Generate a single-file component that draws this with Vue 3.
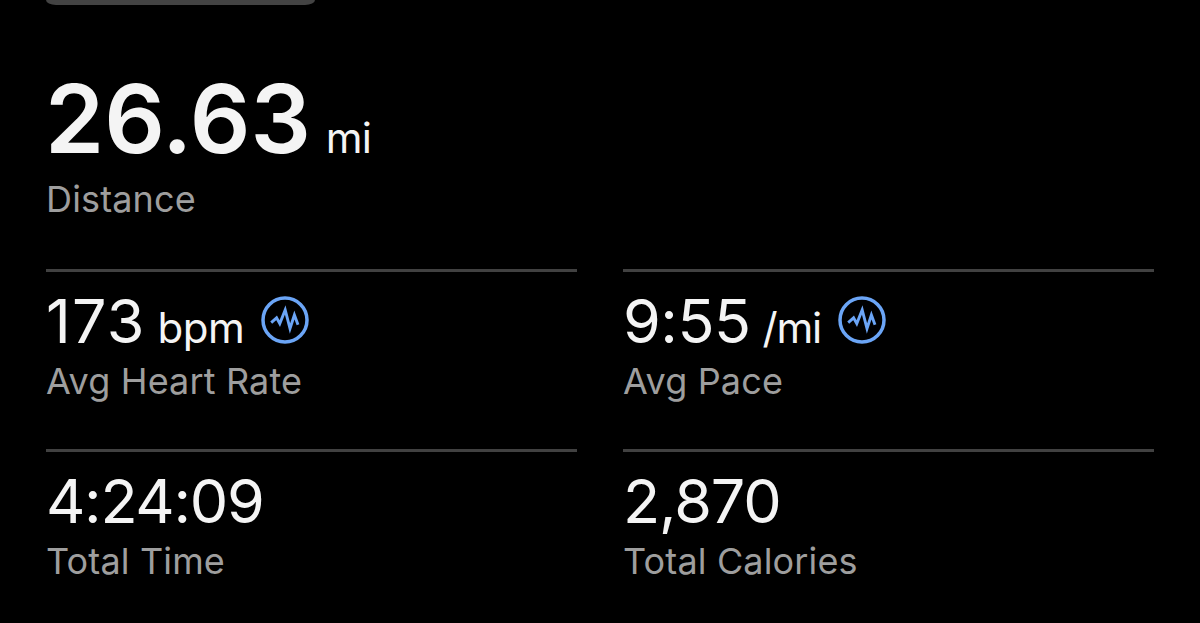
<script setup>
const distance = { value: '26.63', unit: 'mi', label: 'Distance' }

const stats = [
  { id: 'heart', value: '173', unit: 'bpm', label: 'Avg Heart Rate', trend: true },
  { id: 'pace', value: '9:55', unit: '/mi', label: 'Avg Pace', trend: true },
  { id: 'time', value: '4:24:09', label: 'Total Time' },
  { id: 'calories', value: '2,870', label: 'Total Calories' },
]
</script>

<template>
  <main class="summary">
    <div class="tab"></div>

    <section class="hero">
      <div class="hero__line">
        <span class="hero__value">{{ distance.value }}</span>
        <span class="unit">{{ distance.unit }}</span>
      </div>
      <div class="label label--distance">{{ distance.label }}</div>
    </section>

    <section class="grid">
      <div v-for="stat in stats" :key="stat.id" class="stat" :class="`stat--${stat.id}`">
        <div class="stat__line">
          <span class="stat__value">{{ stat.value }}</span>
          <span v-if="stat.unit" class="unit">{{ stat.unit }}</span>
          <svg v-if="stat.trend" class="trend" viewBox="0 0 48 48" fill="none" stroke="currentColor">
            <circle cx="24" cy="24" r="22" stroke-width="3.5" />
            <path
              d="M10.2 26.6 15.6 21.8 18.8 27.6 24.2 14 29 32.5 33.4 19 37 28.8"
              stroke-width="2.9"
              stroke-miterlimit="6"
            />
          </svg>
        </div>
        <div class="label">{{ stat.label }}</div>
      </div>
    </section>
  </main>
</template>

<style>
body {
  background: #000;
}
</style>

<style scoped>
.summary {
  box-sizing: border-box;
  height: 623px;
  padding: 0 46px;
  overflow: hidden;
  background: #000;
  color: #f4f4f4;
  font-family: Inter, "Liberation Sans", sans-serif;
  white-space: nowrap;
}

.tab {
  width: 269px;
  height: 5px;
  border-radius: 0 0 10px 10px / 0 0 5px 5px;
  background: #434343;
}

.hero {
  height: 264px;
  padding-top: 65px;
  box-sizing: border-box;
}

.hero__line {
  display: flex;
  align-items: baseline;
  height: 100px;
}

.hero__value {
  margin-left: -1px;
  font-size: 95px;
  font-weight: 600;
  line-height: 97px;
}

.unit {
  margin-left: 15px;
  font-size: 42px;
  line-height: 50px;
  letter-spacing: -1px;
}

.label {
  color: #9e9e9e;
  font-size: 36px;
  line-height: 44px;
  letter-spacing: 0.15px;
}

.label--distance {
  margin-top: 7px;
}

.grid {
  display: grid;
  grid-template-columns: 531px 531px;
  grid-auto-rows: 180px;
  column-gap: 46px;
}

.stat {
  border-top: 3px solid #414141;
  padding-top: 18px;
}

.stat__line {
  display: flex;
  align-items: baseline;
  height: 62px;
  margin-bottom: 7px;
}

.stat__value {
  font-size: 61px;
  line-height: 62px;
}

.stat--heart .stat__value {
  letter-spacing: 1.2px;
}

.stat--heart .unit {
  margin-left: 12px;
  letter-spacing: -0.5px;
}

.stat--pace .stat__value {
  letter-spacing: -0.5px;
}

.stat--pace .unit {
  margin-left: 12px;
  letter-spacing: -1.3px;
}

.stat--time .stat__value {
  letter-spacing: -1.3px;
}

.stat--calories .stat__value {
  letter-spacing: -1.1px;
}

.trend {
  align-self: flex-start;
  width: 48px;
  height: 48px;
  margin: 6px 0 0 17px;
  color: #6ba5f6;
}
</style>
